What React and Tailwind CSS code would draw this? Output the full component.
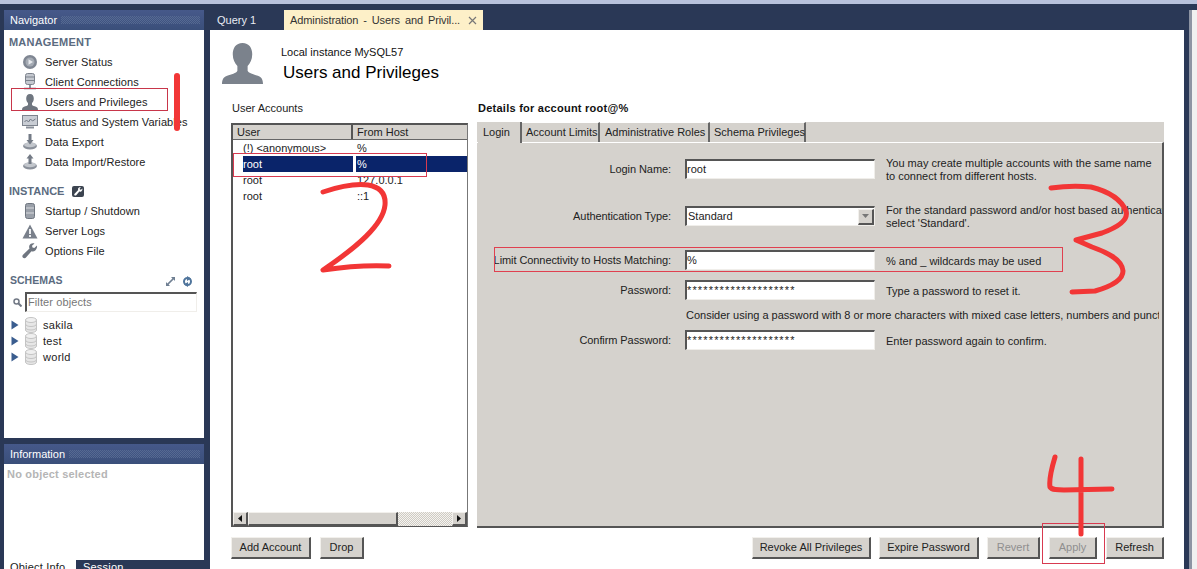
const font = { fontFamily: '"Liberation Sans", Arial, sans-serif' }

const dither = 'bg-[repeating-conic-gradient(#566a92_0_25%,transparent_0_50%)] bg-[length:2px_2px]'
const raised = 'border border-t-[#f2f0ec] border-l-[#f2f0ec] border-r-[#555555] border-b-[#555555] bg-[#d5d2cd] border-r-2 border-b-2'
const sunken = 'border border-t-2 border-l-2 border-t-[#555555] border-l-[#555555] border-r-[#f0eeea] border-b-[#f0eeea] bg-white'

function ServerStatusIcon() {
  return (
    <svg width="16" height="16" viewBox="0 0 16 16">
      <circle cx="8" cy="8" r="7" fill="#7f8692" />
      <circle cx="8" cy="8" r="4.5" fill="#a5abb4" />
      <path d="M6.5 5.2 11 8l-4.500 2.800z" fill="#e8eaee" />
    </svg>
  )
}

function ConnectionsIcon() {
  return (
    <svg width="16" height="18" viewBox="0 0 16 18">
      <rect x="3.500" y="0.500" width="9" height="11" rx="2" fill="#c4c8cf" stroke="#7d838d" />
      <path d="M3.500 4h9M3.500 7.500h9" stroke="#7d838d" />
      <path d="M8 12v3M2 15.500h12" stroke="#6b7280" strokeWidth="1.500" />
    </svg>
  )
}

function PersonIcon({ size = 16, fill = '#6f7680' }) {
  return (
    <svg width={size} height={size} viewBox="0 0 40 40">
      <path d="M20 0c-6.500 0-9.500 5-9.500 11 0 5 2 9 4.500 11.500V27c-1 2.500-6 3.500-10 5-3 1-5 3-5 8h40c0-5-2-7-5-8-4-1.500-9-2.500-10-5v-4.500c2.500-2.500 4.500-6.500 4.500-11.500C29.500 5 26.500 0 20 0z" fill={fill} />
    </svg>
  )
}

function MonitorIcon() {
  return (
    <svg width="16" height="14" viewBox="0 0 16 14">
      <rect x="0.500" y="0.500" width="15" height="10" fill="#c9cdd4" stroke="#7d838d" />
      <path d="M2.500 7l2-2 2 2 2-3 2 2 3-2" fill="none" stroke="#727985" />
      <path d="M4 12.500h8" stroke="#8a909a" strokeWidth="2" />
    </svg>
  )
}

function DiskArrowIcon({ up }) {
  return (
    <svg width="16" height="16" viewBox="0 0 16 16">
      <ellipse cx="8" cy="12" rx="7" ry="3.500" fill="#8b919b" />
      <ellipse cx="8" cy="10.800" rx="6" ry="2.500" fill="#c2c6cc" />
      <path d={up ? 'M8 0 4.500 4.500h2V10h3V4.500h2z' : 'M6.500 0h3v6h2L8 10.500 4.500 6h2z'} fill="#737a85" />
    </svg>
  )
}

function StartupIcon() {
  return (
    <svg width="12" height="16" viewBox="0 0 12 16">
      <rect x="1.500" y="0.500" width="9" height="15" rx="2" fill="#9aa0a9" stroke="#6f7680" />
      <path d="M2 5h8M2 10h8" stroke="#d8dade" />
    </svg>
  )
}

function WarningIcon() {
  return (
    <svg width="16" height="15" viewBox="0 0 16 15">
      <path d="M8 0.500 15.500 14.500H0.500z" fill="#79808b" />
      <path d="M7 5h2v5H7zM7 11h2v2H7z" fill="#eceef0" />
    </svg>
  )
}

function WrenchIcon({ className = '', fill = '#6f7680' }) {
  return (
    <svg className={className} width="16" height="16" viewBox="0 0 16 16">
      <path d="M15 2.500 12.300 5 10.500 4.500 10 2.800 12.500 0.500C10.500-0.200 8.300 0.500 7.500 2.300c-.5 1-.5 2.200 0 3.200L1 11.800C-.2 13 .2 15.300 2.600 15.200c.6 0 1-.3 1.400-.7l5.500-6.300c1.200.4 2.700.2 3.800-.7 1.300-1.100 2-3.200 1.700-5z" fill={fill} />
    </svg>
  )
}

function DbIcon() {
  return (
    <svg width="12" height="16" viewBox="0 0 12 16">
      <path d="M0.500 3v10c0 1.500 2.500 2.500 5.500 2.500s5.500-1 5.500-2.500V3z" fill="#e6e6e6" stroke="#c4c4c4" />
      <ellipse cx="6" cy="3" rx="5.500" ry="2.500" fill="#efefef" stroke="#c4c4c4" />
      <path d="M0.500 7c0 1.500 2.500 2.500 5.500 2.500s5.500-1 5.500-2.500M0.500 10.500c0 1.500 2.500 2.500 5.500 2.500s5.500-1 5.500-2.500" fill="none" stroke="#c4c4c4" />
    </svg>
  )
}

function NavItem({ icon, label }) {
  return (
    <div className="flex h-[20px] items-center text-[11px] tracking-[0.08px] text-[#222222] whitespace-nowrap">
      <div className="mr-[5px] flex w-[20px] justify-center">{icon}</div>
      <span>{label}</span>
    </div>
  )
}

function PanelHeader({ title }) {
  return (
    <div className="flex h-[20px] items-center bg-gradient-to-b from-[#46598a] to-[#3a4f7a] pl-[6px] pr-[4px] text-[11px] text-white">
      <span>{title}</span>
      <div className={`ml-[4px] h-[8px] flex-1 ${dither}`} />
    </div>
  )
}

function Sidebar() {
  return (
    <div className="ml-[4px] flex w-[200px] flex-col">
      <PanelHeader title="Navigator" />
      <div className="h-[408px] overflow-hidden bg-white">
        <div className="pl-[5px] pt-[5px] text-[11px] font-bold tracking-[0.2px] text-[#5b6b80] h-[17px] leading-[14px]">MANAGEMENT</div>
        <div className="ml-[16px] mt-[5px]">
          <NavItem icon={<ServerStatusIcon />} label="Server Status" />
          <NavItem icon={<ConnectionsIcon />} label="Client Connections" />
          <NavItem icon={<PersonIcon />} label="Users and Privileges" />
          <NavItem icon={<MonitorIcon />} label="Status and System Variables" />
          <NavItem icon={<DiskArrowIcon />} label="Data Export" />
          <NavItem icon={<DiskArrowIcon up />} label="Data Import/Restore" />
        </div>
        <div className="mt-[12px] flex h-[14px] items-center pl-[5px] text-[11px] font-bold text-[#5b6b80]">
          <span>INSTANCE</span>
          <span className="ml-[8px] flex h-[11px] w-[12px] items-center justify-center rounded-[2px] bg-[#3c4450]">
            <WrenchIcon fill="#ffffff" className="h-[9px] w-[9px]" />
          </span>
        </div>
        <div className="ml-[16px] mt-[3px]">
          <NavItem icon={<StartupIcon />} label="Startup / Shutdown" />
          <NavItem icon={<WarningIcon />} label="Server Logs" />
          <NavItem icon={<WrenchIcon />} label="Options File" />
        </div>
        <div className="mt-[13px] flex h-[14px] items-center pl-[6px] pr-[11px] text-[10.500px] font-bold text-[#5b6b80]">
          <span>SCHEMAS</span>
          <div className="ml-auto flex items-center gap-[7px]">
            <svg width="9" height="9" viewBox="0 0 9 9">
              <path d="M5 0h4v4L7.600 2.600 2.600 7.600 4 9H0V5l1.400 1.400 5-5z" fill="#6f7f92" />
            </svg>
            <svg width="11" height="11" viewBox="0 0 11 11">
              <circle cx="5.500" cy="5.500" r="3.500" fill="none" stroke="#50759c" strokeWidth="2" />
              <path d="M5 0 9 2.500 5 5zM6 11 2 8.500 6 6z" fill="#50759c" />
            </svg>
          </div>
        </div>
        <div className="mt-[4px] flex items-center">
          <svg className="ml-[9px]" width="9" height="9" viewBox="0 0 9 9">
            <circle cx="3.500" cy="3.500" r="2.500" fill="none" stroke="#727985" strokeWidth="1.500" />
            <path d="m5.500 5.500 3 3" stroke="#727985" strokeWidth="2" />
          </svg>
          <div className={`ml-[3px] flex h-[20px] w-[172px] items-center pl-[1px] text-[11px] tracking-[0.1px] text-[#777777] ${sunken} border-t-[#6d6d6d] border-r-[#d0d0d0] border-b-[#d0d0d0]`}>
            Filter objects
          </div>
        </div>
        <div className="mt-[5px]">
          {['sakila', 'test', 'world'].map((name) => (
            <div key={name} className="flex h-[16px] items-center text-[11px] tracking-[0.3px] text-[#222222]">
              <svg className="ml-[7px]" width="8" height="10" viewBox="0 0 8 10">
                <path d="M0.500 0.500 7.500 5 0.500 9.500z" fill="#3a5d8f" />
              </svg>
              <div className="ml-[6px] flex w-[12px]"><DbIcon /></div>
              <span className="ml-[6px]">{name}</span>
            </div>
          ))}
        </div>
      </div>
      <div className="h-[6px]" />
      <PanelHeader title="Information" />
      <div className="h-[96px] bg-white pl-[3px] pt-[2px] text-[11px] font-bold tracking-[0.2px] text-[#b5b5b5]">No object selected</div>
      <div className="flex h-[9px] overflow-hidden text-[11px] leading-[13px] tracking-[0.2px]">
        <div className="w-[72px] bg-white pl-[6px] pt-[1px] text-[#222222]">Object Info</div>
        <div className="flex-1 pl-[7px] pt-[1px] text-white">Session</div>
      </div>
    </div>
  )
}

function TabBar() {
  return (
    <div className="flex h-[20px] items-stretch text-[11px]">
      <div className="flex w-[74px] items-center pl-[7px] text-[#e8ecf4]">Query 1</div>
      <div className="flex w-[199px] items-center bg-[#fdf0c8] pl-[6px] tracking-[-0.1px] text-[#333333] [word-spacing:2px] whitespace-nowrap">
        <span>Administration - Users and Privil...</span>
        <svg className="ml-auto mr-[6px]" width="9" height="9" viewBox="0 0 9 9">
          <path d="m1 1 7 7M8 1 1 8" stroke="#777777" strokeWidth="1.200" />
        </svg>
      </div>
    </div>
  )
}

function UserList() {
  const rows = [
    ['(!) <anonymous>', '%'],
    ['root', '%'],
    ['root', '127.0.0.1'],
    ['root', '::1'],
  ]
  return (
    <div className="flex h-[404px] flex-col border border-t-2 border-l-2 border-t-[#555555] border-l-[#555555] border-r-[#777777] border-b-[#555555] bg-white text-[11px] text-[#222222]">
      <div className="flex h-[14px] bg-[#d5d2cd] leading-[14px]">
        <div className="w-[120px] border-r-2 border-[#555555] pl-[4px]">User</div>
        <div className="flex-1 pl-[4px]">From Host</div>
      </div>
      <div className="h-[1px] bg-[#666666]" />
      {rows.map(([user, host], i) => (
        <div key={i} className="flex h-[16px] items-center">
          <div className={`ml-[10px] flex h-full w-[110px] items-center ${i === 1 ? 'bg-[#0a246a] text-white' : ''}`}>{user}</div>
          <div className={`ml-[3px] flex h-full flex-1 items-center pl-[1px] ${i === 1 ? 'bg-[#0a246a] text-white' : ''}`}>{host}</div>
        </div>
      ))}
      <div className="mt-auto flex h-[14px]">
        <div className={`flex w-[15px] items-center justify-center ${raised}`}>
          <svg width="4" height="7" viewBox="0 0 4 7"><path d="M4 0v7L0 3.500z" fill="#111111" /></svg>
        </div>
        <div className={`w-[150px] ${raised}`} />
        <div className="flex-1 bg-[repeating-conic-gradient(#cfcbc3_0_25%,#f4f3f0_0_50%)] bg-[length:2px_2px]" />
        <div className={`flex w-[15px] items-center justify-center ${raised}`}>
          <svg width="4" height="7" viewBox="0 0 4 7"><path d="M0 0v7l4-3.500z" fill="#111111" /></svg>
        </div>
      </div>
    </div>
  )
}

function Field({ label, value, top, help, select, secret }) {
  return (
    <div className={`flex items-start ${top}`}>
      <div className="flex h-[20px] w-[194px] shrink-0 items-center justify-end whitespace-nowrap tracking-[-0.08px]">{label}</div>
      <div className={`ml-[14px] flex h-[20px] w-[190px] shrink-0 items-center ${sunken}`}>
        <span className={`${select ? 'ml-[1px]' : ''} ${secret ? 'tracking-[1.15px]' : ''}`}>{value}</span>
        {select && (
          <div className={`ml-auto flex h-[16px] w-[16px] items-center justify-center ${raised}`}>
            <svg width="7" height="4" viewBox="0 0 7 4"><path d="M0 0h7L3.500 4z" fill="#777777" /></svg>
          </div>
        )}
      </div>
      <div className="ml-[11px] flex h-[20px] translate-y-[1px] flex-col justify-center overflow-visible whitespace-nowrap leading-[13px]">{help}</div>
    </div>
  )
}

function DetailsPanel() {
  const tabs = [
    ['Account Limits', 'w-[78px] pl-[4px]'],
    ['Administrative Roles', 'w-[110px] pl-[5px]'],
    ['Schema Privileges', 'w-[96px] pl-[4px]'],
  ]
  return (
    <div className="h-[406px] text-[11px] text-[#222222]">
      <div className="flex h-[20px] items-stretch bg-[#d5d2cd] whitespace-nowrap">
        <div className="z-10 ml-[1px] flex h-[21px] w-[44px] items-center border-r-2 border-[#666666] bg-[#d5d2cd] pl-[5px]">Login</div>
        {tabs.map(([t, w]) => (
          <div key={t} className={`flex items-center border-r-2 border-t border-[#666666] border-t-white ${w}`}>{t}</div>
        ))}
      </div>
      <div className="flex h-[386px] flex-col overflow-hidden border-t border-r-2 border-b-2 border-t-white border-r-[#555555] border-b-[#555555] bg-[#d5d2cd] pr-[3px]">
        <Field
          top="mt-[16px]"
          label="Login Name:"
          value="root"
          help={<><div>You may create multiple accounts with the same name</div><div>to connect from different hosts.</div></>}
        />
        <Field
          top="mt-[27px]"
          label="Authentication Type:"
          value="Standard"
          select
          help={<><div>For the standard password and/or host based authentication method,</div><div>select 'Standard'.</div></>}
        />
        <Field top="mt-[24px]" label="Limit Connectivity to Hosts Matching:" value="%" help="% and _ wildcards may be used" />
        <Field top="mt-[10px]" label="Password:" value="********************" secret help="Type a password to reset it." />
        <div className="ml-[209px] mt-[9px] h-[13px] overflow-hidden whitespace-nowrap leading-[13px]">
          Consider using a password with 8 or more characters with mixed case letters, numbers and punctuation
        </div>
        <Field top="mt-[8px]" label="Confirm Password:" value="********************" secret help="Enter password again to confirm." />
      </div>
    </div>
  )
}

function Button({ children, w, disabled }) {
  return (
    <div className={`flex h-[22px] items-center justify-center text-[11px] ${w} ${raised} ${disabled ? 'text-[#8f8f8f]' : 'text-[#222222]'}`}>
      {children}
    </div>
  )
}

function Annotations() {
  return (
    <div className="pointer-events-none absolute inset-0">
      <div className="absolute left-[11px] top-[88px] h-[23px] w-[157px] border border-[#c8364a]" />
      <div className="absolute left-[233px] top-[153px] h-[24px] w-[194px] border border-[#d83a50]" />
      <div className="absolute left-[494px] top-[247px] h-[25px] w-[569px] border border-[#e0404f]" />
      <div className="absolute left-[1042px] top-[523px] h-[41px] w-[63px] border border-[#d83a50]" />
      <svg className="absolute inset-0" width="1197" height="569" viewBox="0 0 1197 569" fill="none" stroke="#f23636" strokeLinecap="round" strokeLinejoin="round">
        <path d="M177 76v52" strokeWidth="6" />
        <path d="M323 192c12-4 30-9 45-7 12 2 18 8 17 20-2 20-28 42-62 65 20-3 44-5 66-4" strokeWidth="5" />
        <path d="M1051 188c14-2 30-2 40-1 16 4 30 12 35 24 3 10-10 17-24 22l-26 7 16 7c14 5 30 12 31 24 0 10-14 16-28 20l-23 1" strokeWidth="5" />
        <path d="M1055 457c-3 10-6 24-5 30 2 3 8 3 14 3l48-1M1081 459v75" strokeWidth="5" />
      </svg>
    </div>
  )
}

export default function App() {
  return (
    <div style={font} className="relative flex h-[569px] w-[1197px] flex-col overflow-hidden bg-[#2a3856]">
      <div className="h-[4px] shrink-0 bg-[#b8c2dc]" />
      <div className="flex flex-1 pt-[6px]">
        <Sidebar />
        <div className="ml-[6px] flex w-[974px] flex-col">
          <TabBar />
          <div className="flex-1 bg-white">
            <div className="flex h-[70px] pl-[12px] pt-[13px]">
              <PersonIcon size={41} fill="#7b828c" />
              <div className="ml-[18px] mt-[3px]">
                <div className="text-[11px] leading-[13px] text-[#111111]">Local instance MySQL57</div>
                <div className="ml-[2px] mt-[3px] text-[17px] leading-[22px] text-black">Users and Privileges</div>
              </div>
            </div>
            <div className="flex pl-[21px]">
              <div className="w-[237px]">
                <div className="h-[16px] pl-[1px] text-[11px] leading-[16px] text-[#222222]">User Accounts</div>
                <div className="mt-[7px]"><UserList /></div>
                <div className="mt-[10px] flex gap-[9px]">
                  <Button w="w-[80px]">Add Account</Button>
                  <Button w="w-[44px]">Drop</Button>
                </div>
              </div>
              <div className="ml-[9px] w-[687px]">
                <div className="h-[16px] pl-[1px] text-[11px] font-bold leading-[16px] tracking-[0.25px] text-[#111111]">Details for account root@%</div>
                <div className="mt-[6px]"><DetailsPanel /></div>
                <div className="mt-[9px] flex justify-end">
                  <Button w="w-[119px]">Revoke All Privileges</Button>
                  <div className="w-[8px]" />
                  <Button w="w-[100px]">Expire Password</Button>
                  <div className="w-[8px]" />
                  <Button w="w-[53px]" disabled>Revert</Button>
                  <div className="w-[9px]" />
                  <Button w="w-[48px]" disabled>Apply</Button>
                  <div className="w-[9px]" />
                  <Button w="w-[58px]">Refresh</Button>
                </div>
              </div>
            </div>
          </div>
        </div>
        <div className="ml-[5px] w-[3px] bg-[#8d94a3]" />
        <div className="w-[5px] bg-[#f0f0f0]" />
      </div>
      <Annotations />
    </div>
  )
}
